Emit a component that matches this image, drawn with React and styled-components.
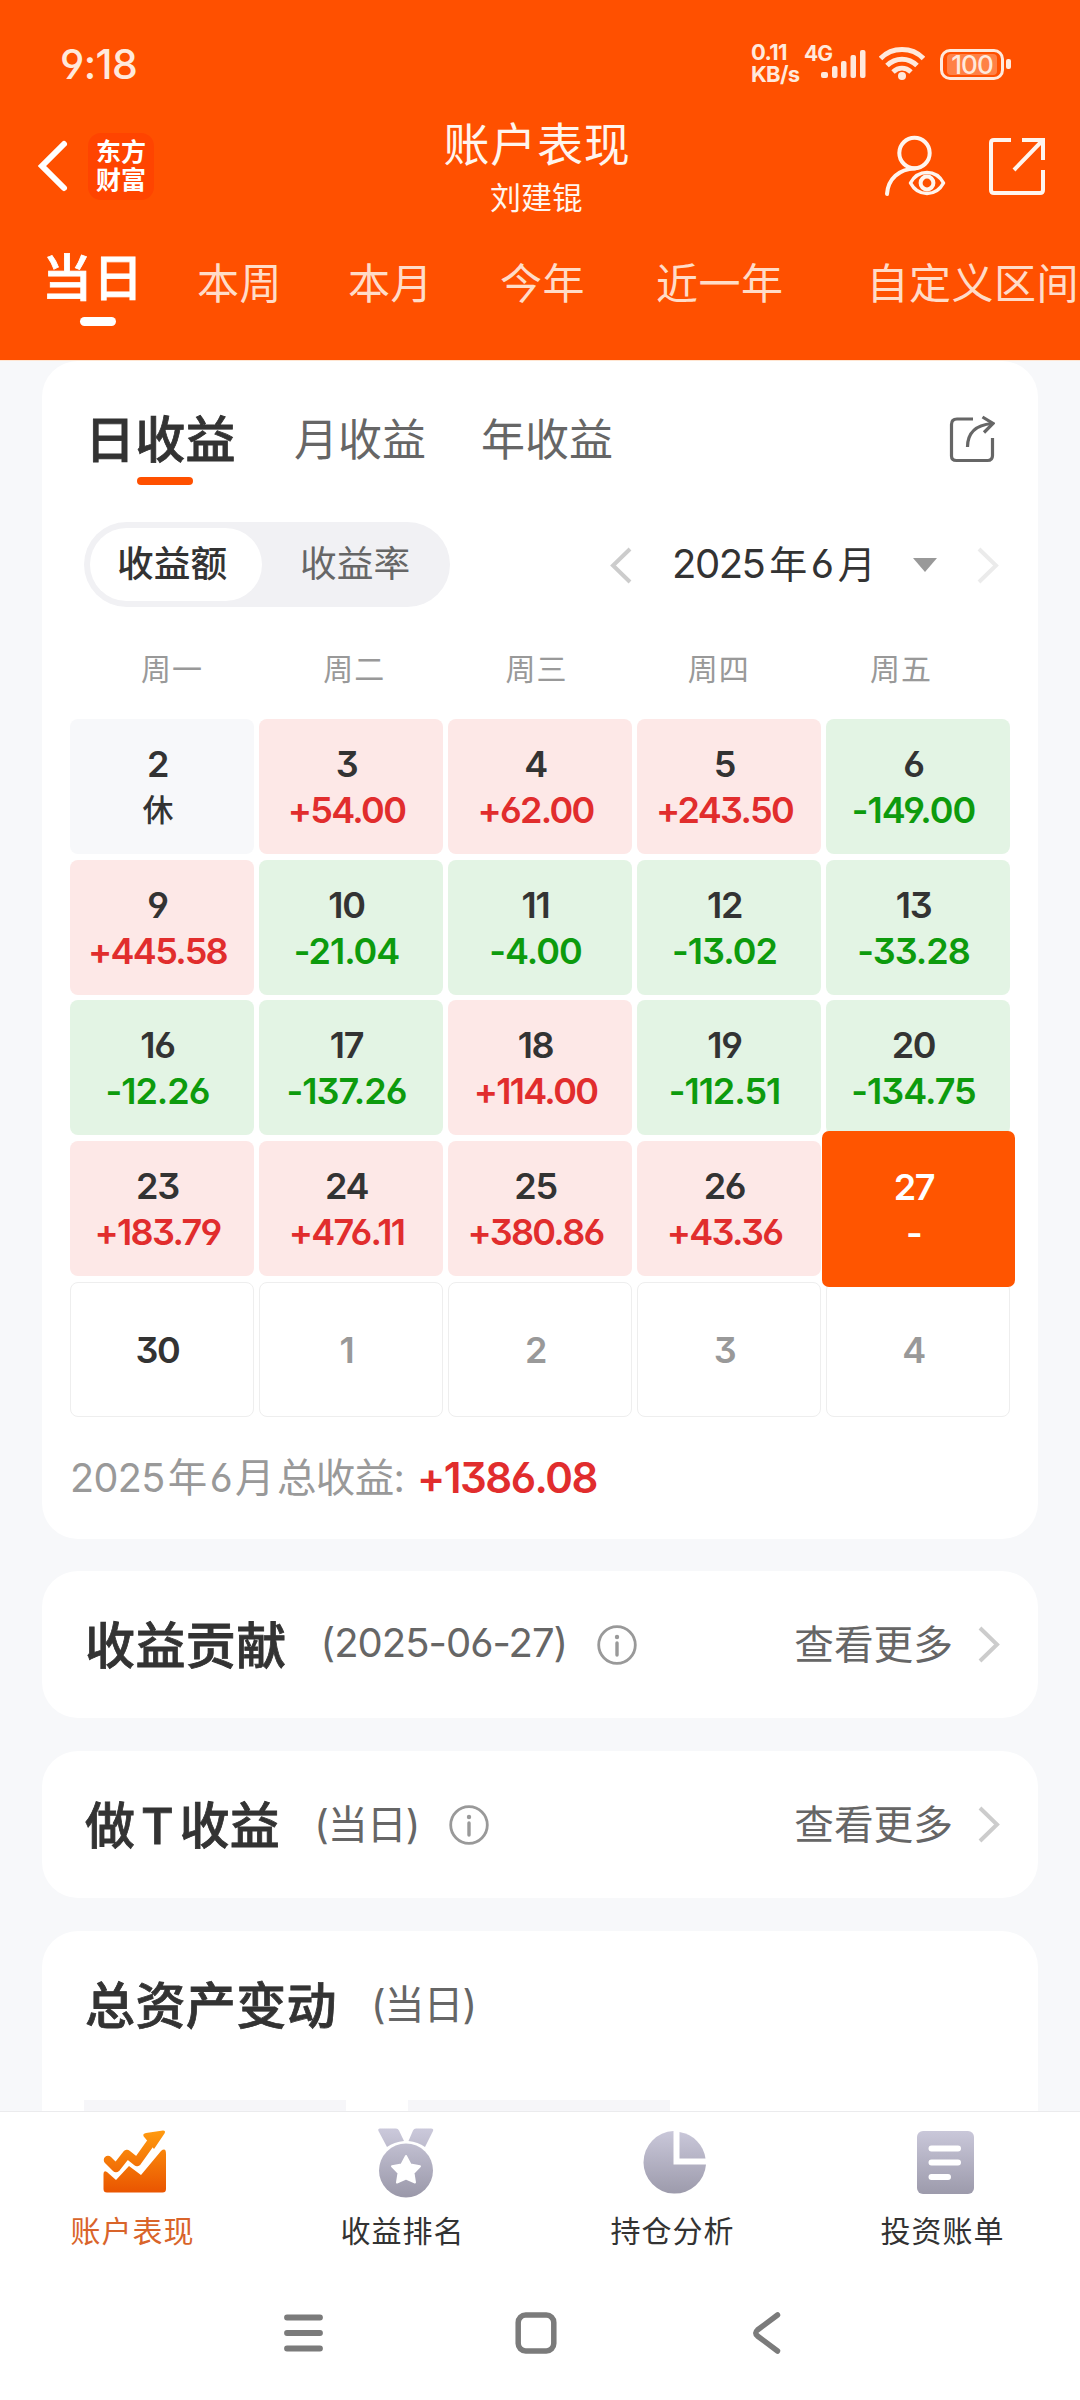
import React from 'react';
import styled, { createGlobalStyle, css } from 'styled-components';

const weekdays = ['周一', '周二', '周三', '周四', '周五'];

const days = [
	{ day: '2', value: '休', kind: 'rest' },
	{ day: '3', value: '+54.00', kind: 'up' },
	{ day: '4', value: '+62.00', kind: 'up' },
	{ day: '5', value: '+243.50', kind: 'up' },
	{ day: '6', value: '-149.00', kind: 'down' },
	{ day: '9', value: '+445.58', kind: 'up' },
	{ day: '10', value: '-21.04', kind: 'down' },
	{ day: '11', value: '-4.00', kind: 'down' },
	{ day: '12', value: '-13.02', kind: 'down' },
	{ day: '13', value: '-33.28', kind: 'down' },
	{ day: '16', value: '-12.26', kind: 'down' },
	{ day: '17', value: '-137.26', kind: 'down' },
	{ day: '18', value: '+114.00', kind: 'up' },
	{ day: '19', value: '-112.51', kind: 'down' },
	{ day: '20', value: '-134.75', kind: 'down' },
	{ day: '23', value: '+183.79', kind: 'up' },
	{ day: '24', value: '+476.11', kind: 'up' },
	{ day: '25', value: '+380.86', kind: 'up' },
	{ day: '26', value: '+43.36', kind: 'up' },
	{ day: '27', value: '-', kind: 'today' },
	{ day: '30', kind: 'empty' },
	{ day: '1', kind: 'next' },
	{ day: '2', kind: 'next' },
	{ day: '3', kind: 'next' },
	{ day: '4', kind: 'next' }
];

const periods = [
	{ label: '本周', gap: 53 },
	{ label: '本月', gap: 66 },
	{ label: '今年', gap: 67 },
	{ label: '近一年', gap: 71 },
	{ label: '自定义区间', gap: 83 }
];

function StatusIcons() {
	return (
		<StatusRight>
			<NetSpeed>
				<span>0.11</span>
				<span>KB/s</span>
			</NetSpeed>
			<NetType>4G</NetType>
			<svg width="46" height="30" viewBox="0 0 46 30" fill="#ffe9dc">
				<rect x="0" y="23" width="7" height="6" rx="2" />
				<rect x="11" y="17" width="5.5" height="12" rx="2" />
				<rect x="20" y="12" width="5.5" height="17" rx="2" />
				<rect x="29.5" y="6" width="5.5" height="23" rx="2" />
				<rect x="39" y="1" width="5.5" height="28" rx="2" />
			</svg>
			<WifiIcon width="46" height="36" viewBox="0 0 46 36" fill="none" stroke="#ffe9dc" strokeWidth="5">
				<path d="M1.5 12.5C13 .5 33 .5 44.500 12.500" />
				<path d="M8 19.500C16.500 11 29.500 11 38 19.500" />
				<path d="M14 26C19.500 21 26.500 21 32 26" />
				<circle cx="23" cy="30" r="4" fill="#ffe9dc" stroke="none" />
			</WifiIcon>
			<Battery><span>100</span></Battery>
			<BatteryTip />
		</StatusRight>
	);
}

function UserEyeIcon() {
	return (
		<svg width="64" height="66" viewBox="0 0 64 66" fill="none" stroke="#fff5ee" strokeWidth="4">
			<circle cx="31.500" cy="20" r="15.200" />
			<path d="M4 61C5 46 16 36 32 35.500" strokeLinecap="round" />
			<path d="M27.500 50C35 36 53 36 60.500 50C53 64 35 64 27.500 50Z" fill="#ff5000" strokeWidth="3.500" strokeLinejoin="round" />
			<circle cx="44" cy="50" r="6.400" strokeWidth="4" />
		</svg>
	);
}

function ExportIcon() {
	return (
		<svg width="58" height="60" viewBox="0 0 58 60" fill="none" stroke="#fff5ee" strokeWidth="4">
			<path d="M23 4H6Q3 4 3 7V54Q3 57 6 57H52Q55 57 55 54V34" />
			<path d="M34 4H55V24M54 5L26 34" />
		</svg>
	);
}

function ShareIcon() {
	return (
		<svg width="46" height="48" viewBox="0 0 46 48" fill="none" stroke="#666" strokeWidth="3.200">
			<path d="M24 4H8Q2.500 4 2.500 9.500V41Q2.500 45.500 7.500 45.500H38.500Q43.500 45.500 43.500 40.500V23" />
			<path d="M18.500 32C18.500 17 27 10 43 8.500" />
			<path d="M33.500 2L44 8.500L35 17.500" />
		</svg>
	);
}

function Chevron({ color, left }) {
	return (
		<svg width="22" height="37" viewBox="0 0 22 37" fill="none" stroke={color} strokeWidth="4">
			<path d={left ? 'M20 2L3 18.500L20 35' : 'M2 2L19 18.500L2 35'} />
		</svg>
	);
}

function InfoIcon() {
	return (
		<svg width="40" height="40" viewBox="0 0 40 40" fill="none" stroke="#999" strokeWidth="2.800">
			<circle cx="20" cy="20" r="18.300" />
			<circle cx="20" cy="12" r="2.200" fill="#999" stroke="none" />
			<path d="M20 18V30" strokeWidth="3.400" strokeLinecap="round" />
		</svg>
	);
}

function ChartIcon() {
	return (
		<svg width="72" height="72" viewBox="0 0 72 72">
			<defs>
				<linearGradient id="orange" gradientUnits="userSpaceOnUse" x1="0" y1="4" x2="0" y2="66">
					<stop offset="0" stopColor="#ff990f" />
					<stop offset="1" stopColor="#e95300" />
				</linearGradient>
			</defs>
			<path d="M9 32L17 40L28 26L38 34L53 13" fill="none" stroke="url(#orange)" strokeWidth="8.500" strokeLinecap="round" strokeLinejoin="round" />
			<path d="M46 10Q42 6 47 5L64 2.500Q67 2.500 65.500 5.500L55 21Z" fill="url(#orange)" />
			<path d="M4.500 46Q4.500 42 8 44L17 52L30 38L42 47L62 23Q67 19 67 26V61Q67 64.500 63.500 64.500H8Q4.500 64.500 4.500 61Z" fill="url(#orange)" />
		</svg>
	);
}

function GreyGradient() {
	return (
		<defs>
			<linearGradient id="grey" gradientUnits="userSpaceOnUse" x1="0" y1="2" x2="0" y2="68">
				<stop offset="0" stopColor="#cac8da" />
				<stop offset="1" stopColor="#9b99aa" />
			</linearGradient>
		</defs>
	);
}

function MedalIcon() {
	return (
		<svg width="72" height="72" viewBox="-1 0 72 72" fill="url(#grey)">
			<GreyGradient />
			<path d="M10 .5H26Q28 .5 29 2.500L34 13Q24 14 17 19L8.500 3Q7.500 .5 10 .5Z" />
			<path d="M61 .5H46Q44 .5 43 2.500L38.500 13Q48 14 55 19L63 3Q64 .5 61 .5Z" />
			<circle cx="36" cy="42.500" r="27" />
			<path d="M36 28L40.500 36.500L50 38.200L43.500 45L45 54.500L36 50.500L27 54.500L28.500 45L22 38.200L31.500 36.500Z" fill="#fff" stroke="#fff" strokeWidth="2" strokeLinejoin="round" />
		</svg>
	);
}

function PieIcon() {
	return (
		<svg width="72" height="72" viewBox="0 0 72 72" fill="url(#grey)">
			<path d="M34.500 3A31.300 31.300 0 1 0 67 36.500H34.500Z" />
			<path d="M40.500 4A31 31 0 0 1 66.500 30.500H40.500Z" />
		</svg>
	);
}

function BillIcon() {
	return (
		<svg width="72" height="72" viewBox="0 0 72 72" fill="url(#grey)">
			<rect x="8" y="3" width="57" height="63" rx="6" />
			<path d="M22.500 20.500H49M22.500 34.500H49M22.500 49H39" stroke="#fff" strokeWidth="6" strokeLinecap="round" />
		</svg>
	);
}

function SectionCard({ title, note, tall, more }) {
	return (
		<Card $height={tall ? 181 : 147}>
			<SectionHead>
				<SectionTitle>{title}</SectionTitle>
				<SectionNote>{note}</SectionNote>
				{more && <InfoIcon />}
				{more && (
					<More>
						<span>查看更多</span>
						<Chevron color="#ccc" />
					</More>
				)}
			</SectionHead>
			{tall && (
				<Stubs>
					<Stub />
					<Stub />
				</Stubs>
			)}
		</Card>
	);
}

function App() {
	return (
		<Screen>
			<GlobalStyle />
			<Header>
				<StatusBar>
					<Clock>9:18</Clock>
					<StatusIcons />
				</StatusBar>
				<TitleBar>
					<TitleLeft>
						<svg width="32" height="54" viewBox="0 0 32 54" fill="none" stroke="#fff" strokeWidth="6" strokeLinecap="round" strokeLinejoin="miter">
							<path d="M27 5L5 27L27 49" />
						</svg>
						<Logo>
							<span>东方</span>
							<span>财富</span>
						</Logo>
					</TitleLeft>
					<TitleCenter>
						<Title>账户表现</Title>
						<Owner>刘建锟</Owner>
					</TitleCenter>
					<TitleRight>
						<UserEyeIcon />
						<ExportIcon />
					</TitleRight>
				</TitleBar>
				<PeriodTabs>
					<ActivePeriod>当日</ActivePeriod>
					{periods.map(item =>
						<Period key={item.label} $gap={item.gap}>{item.label}</Period>
					)}
				</PeriodTabs>
			</Header>
			<Content>
				<Card $height={1178}>
					<ProfitTabs>
						<ProfitTab $active>日收益</ProfitTab>
						<ProfitTab>月收益</ProfitTab>
						<ProfitTab>年收益</ProfitTab>
						<ShareIcon />
					</ProfitTabs>
					<Filters>
						<Switch>
							<SwitchItem $active>收益额</SwitchItem>
							<SwitchItem>收益率</SwitchItem>
						</Switch>
						<MonthPicker>
							<Chevron color="#ccc" left />
							<Month>2025<i>年</i>6<i>月</i></Month>
							<Caret />
							<Chevron color="#ebebeb" />
						</MonthPicker>
					</Filters>
					<Weekdays>
						{weekdays.map(name => <span key={name}>{name}</span>)}
					</Weekdays>
					<Calendar>
						{days.map((item, i) =>
							<Day key={i} $kind={item.kind}>
								<span>{item.day}</span>
								{item.value && <DayValue $kind={item.kind}>{item.value}</DayValue>}
							</Day>
						)}
					</Calendar>
					<Total>
						<TotalLabel>2025<i>年</i>6<i>月</i>总收益:</TotalLabel>
						<TotalValue>+1386.08</TotalValue>
					</Total>
				</Card>
				<SectionCard title="收益贡献" note="(2025-06-27)" more />
				<SectionCard title={<>做<i>T</i>收益</>} note="(当日)" more />
				<SectionCard title="总资产变动" note="(当日)" tall />
			</Content>
			<TabBar>
				<TabItem $active><ChartIcon /><span>账户表现</span></TabItem>
				<TabItem><MedalIcon /><span>收益排名</span></TabItem>
				<TabItem><PieIcon /><span>持仓分析</span></TabItem>
				<TabItem><BillIcon /><span>投资账单</span></TabItem>
			</TabBar>
			<SystemNav>
				<svg width="42" height="44" viewBox="0 0 42 44" stroke="#7b7b7b" strokeWidth="5.800" strokeLinecap="round">
					<path d="M3 6.500H36M3 22H36M3 37.500H36" />
				</svg>
				<svg width="42" height="44" viewBox="0 0 42 44" fill="none" stroke="#7b7b7b" strokeWidth="5.500">
					<rect x="3.200" y="4" width="35.600" height="36" rx="7.500" />
				</svg>
				<svg width="42" height="44" viewBox="0 0 42 44" fill="none" stroke="#7b7b7b" strokeWidth="5.500" strokeLinecap="round">
					<path d="M31.500 4L11.500 19Q8 22 11.500 25L31.500 40" />
				</svg>
			</SystemNav>
		</Screen>
	);
}

const GlobalStyle = createGlobalStyle`
	* { box-sizing: border-box; }
	body {
		margin: 0;
		font-family: Inter, "Noto Sans CJK SC", sans-serif;
		font-feature-settings: "cv03", "cv04", "cv09";
		color: #333;
	}
	i { font-style: normal; }
	svg { display: block; flex-shrink: 0; }
`;

const Screen = styled.div`
	width: 1080px;
	height: 2400px;
	display: flex;
	flex-direction: column;
	overflow: hidden;
	background: #fff;
`;

const Header = styled.header`
	height: 361px;
	flex-shrink: 0;
	background: #ff5000;
	border-bottom: 1px solid #ffe6d2;
	overflow: hidden;
`;

const StatusBar = styled.div`
	height: 96px;
	padding: 32px 69px 0 60px;
	display: flex;
	justify-content: space-between;
	align-items: flex-start;
	color: #ffe9dc;
`;

const Clock = styled.div`
	height: 64px;
	line-height: 64px;
	font-size: 41px;
	font-weight: 500;
	letter-spacing: -0.6px;
`;

const StatusRight = styled.div`
	height: 64px;
	display: flex;
	align-items: center;
	font-weight: 700;
`;

const NetSpeed = styled.div`
	width: 53px;
	margin-top: -2px;
	display: flex;
	flex-direction: column;
	font-size: 22px;
	line-height: 22px;
	letter-spacing: -0.7px;
`;

const NetType = styled.div`
	width: 17px;
	margin-top: -20px;
	font-size: 21px;
	line-height: 22px;
	letter-spacing: -1px;
`;

const WifiIcon = styled.svg`
	margin: 0 15px 0 12px;
`;

const Battery = styled.div`
	width: 64px;
	height: 31px;
	padding: 2px 4px;
	border: 3px solid #ffe9dc;
	border-radius: 10px;
	display: flex;

	> span {
		flex: 1;
		border-radius: 4px;
		background: #ff8146;
		text-align: center;
		font-size: 26px;
		font-weight: 500;
		line-height: 22px;
		letter-spacing: -1px;
	}
`;

const BatteryTip = styled.div`
	width: 5px;
	height: 10px;
	margin-left: 2px;
	border-radius: 2px;
	background: #ffe9dc;
`;

const TitleBar = styled.div`
	height: 140px;
	display: grid;
	grid-template-columns: 430px 1fr 437px;
	align-items: center;
	color: #fff5ee;
`;

const TitleLeft = styled.div`
	display: flex;
	align-items: center;
	gap: 19px;
	padding-left: 37px;
`;

const Logo = styled.div`
	width: 66px;
	height: 67px;
	border-radius: 13px;
	background: #ff4400;
	color: #fff;
	display: flex;
	flex-direction: column;
	align-items: center;
	justify-content: center;
	font-size: 25px;
	font-weight: 700;
	line-height: 28px;
`;

const TitleCenter = styled.div`
	text-align: center;
	white-space: nowrap;
`;

const Title = styled.div`
	font-size: 46px;
	line-height: 60px;
	letter-spacing: 0.7px;
	padding-left: 1px;
`;

const Owner = styled.div`
	font-size: 31px;
	line-height: 42px;
	margin-top: 3px;
`;

const TitleRight = styled.div`
	display: flex;
	align-items: center;
	justify-content: flex-end;
	gap: 41px;
	padding-right: 34px;
`;

const PeriodTabs = styled.nav`
	display: flex;
	padding-left: 42px;
	white-space: nowrap;
`;

const ActivePeriod = styled.div`
	width: 102px;
	margin-top: 12px;
	font-size: 50px;
	line-height: 60px;
	font-weight: 500;
	-webkit-text-stroke: 0.8px currentColor;
	letter-spacing: 1px;
	color: #fff;

	&::after {
		content: '';
		display: block;
		width: 36px;
		height: 9px;
		margin: 9px 0 0 38px;
		border-radius: 5px;
		background: #fff;
	}
`;

const Period = styled.div`
	margin: 18px 0 0 ${props => props.$gap}px;
	font-size: 42px;
	line-height: 60px;
	letter-spacing: 0.5px;
	color: #ffdcc8;
`;

const Content = styled.main`
	height: 1750px;
	flex-shrink: 0;
	padding: 0 42px;
	display: flex;
	flex-direction: column;
	gap: 33px;
	background: #f7f8fa;
	overflow: hidden;
`;

const Card = styled.section`
	height: ${props => props.$height}px;
	flex-shrink: 0;
	border-radius: ${props => props.$height === 181 ? '36px 36px 0 0' : '36px'};
	background: #fff;

	&:first-child {
		margin-bottom: -1px;
	}
`;

const ProfitTabs = styled.div`
	height: 161px;
	padding: 45px 43px 0 43px;
	display: flex;
	align-items: flex-start;

	> svg {
		margin: 9px 0 0 auto;
	}
`;

const ProfitTab = styled.div`
	font-size: 44px;
	line-height: 68px;
	color: #666;
	margin-left: 56px;

	& + & + & {
		margin-left: 55px;
	}

	${props => props.$active && css`
		width: 153px;
		font-size: 50px;
		font-weight: 500;
		-webkit-text-stroke: 0.8px currentColor;
		letter-spacing: 0.3px;
		color: #333;
		margin-left: 0;

		&::after {
			content: '';
			display: block;
			width: 56px;
			height: 8px;
			margin: 3px auto 0 52px;
			border-radius: 4px;
			background: #ff5000;
		}
	`}
`;

const Filters = styled.div`
	height: 86px;
	padding: 0 39px 0 42px;
	display: flex;
	align-items: center;
	justify-content: space-between;
`;

const Switch = styled.div`
	width: 366px;
	height: 85px;
	margin-top: -1px;
	padding: 6px;
	border-radius: 43px;
	background: #f1f1f4;
	display: flex;
`;

const SwitchItem = styled.div`
	width: ${props => props.$active ? 172 : 182}px;
	border-radius: 37px;
	background: ${props => props.$active ? '#fff' : 'transparent'};
	color: ${props => props.$active ? '#333' : '#666'};
	font-size: 36.700px;
	font-weight: ${props => props.$active ? 500 : 400};
	line-height: 72px;
	padding-left: ${props => props.$active ? 27 : 38}px;
`;

const MonthPicker = styled.div`
	display: flex;
	align-items: center;
`;

const Month = styled.div`
	width: 202px;
	margin: -7px 39px 0 40px;
	font-size: 40px;
	letter-spacing: -1.5px;
	white-space: nowrap;

	i {
		font-size: 38px;
		margin: 0 5px;
	}
`;

const Caret = styled.div`
	border: 12px solid transparent;
	border-top: 14px solid #999;
	border-bottom: 0;
	margin-right: 40px;
`;

const Weekdays = styled.div`
	height: 111px;
	padding: 39px 46px 0 39px;
	display: grid;
	grid-template-columns: repeat(5, 1fr);
	text-align: center;
	font-size: 30px;
	line-height: 44px;
	letter-spacing: 1px;
	color: #999;
`;

const Calendar = styled.div`
	padding: 0 28px;
	display: grid;
	grid-template-columns: repeat(5, 184px);
	grid-auto-rows: 135px;
	gap: 5.700px 5px;
`;

const kinds = {
	rest: css`background: #f7f8fa;`,
	up: css`background: #fde8e7;`,
	down: css`background: #e3f4e4;`,
	today: css`
		position: relative;
		z-index: 1;
		margin: -10px -5px -11px -4px;
		border-radius: 7px;
		background: #ff5500;
		color: #fff;
	`,
	empty: css`border: 1px solid #eee;`,
	next: css`border: 1px solid #eee; color: #999;`
};

const Day = styled.div`
	display: flex;
	flex-direction: column;
	align-items: center;
	justify-content: center;
	padding: 1px 9px 0 0;
	border-radius: 8px;
	font-size: 36px;
	font-weight: 575;
	line-height: 46px;
	letter-spacing: -1.3px;
	${props => kinds[props.$kind]}
`;

const DayValue = styled.span`
	color: ${props => ({ up: '#e12d2d', down: '#0d9b0d' })[props.$kind] || 'inherit'};
	font-size: ${props => props.$kind === 'rest' ? 31 : 36}px;
	font-weight: ${props => props.$kind === 'rest' ? 500 : 575};
	letter-spacing: ${props => props.$kind === 'up' ? -1.7 : -1}px;
`;

const Total = styled.div`
	padding: 31px 28px 0;
	display: flex;
	line-height: 60px;
`;

const TotalLabel = styled.div`
	width: 347px;
	font-size: 39.500px;
	letter-spacing: -0.6px;
	color: #999;
	white-space: nowrap;

	i {
		margin: 0 3px;
	}
`;

const TotalValue = styled.div`
	font-size: 42px;
	font-weight: 600;
	letter-spacing: -1.5px;
	color: #e12d2d;
`;

const SectionHead = styled.div`
	height: 147px;
	padding: 0 38px 0 43px;
	display: flex;
	align-items: center;
`;

const SectionTitle = styled.h2`
	margin: -6px 0 0;
	font-size: 50px;
	font-weight: 500;
	-webkit-text-stroke: 0.8px currentColor;
	letter-spacing: 0.4px;

	i {
		margin: 0 5.500px;
	}
`;

const SectionNote = styled.span`
	margin: -5px 30px 0 34px;
	font-size: 40px;
	letter-spacing: -1px;
	color: #666;
`;

const More = styled.div`
	margin-left: auto;
	display: flex;
	align-items: center;
	gap: 25px;
	font-size: 39.700px;
	color: #666;

	> span {
		margin-top: -7px;
	}
`;

const Stubs = styled.div`
	display: flex;
	gap: 62px;
	padding: 22px 42px 0;
`;

const Stub = styled.div`
	width: 262px;
	height: 12px;
	background: #f6f6f9;
`;

const TabBar = styled.nav`
	height: 162px;
	flex-shrink: 0;
	border-top: 1px solid #ebebed;
	display: grid;
	grid-template-columns: repeat(4, 270px);
`;

const TabItem = styled.div`
	padding-top: 16px;
	display: flex;
	flex-direction: column;
	align-items: center;
	font-size: 30px;
	line-height: 40px;
	letter-spacing: 1px;
	color: ${props => props.$active ? '#d9642a' : '#333'};

	> span {
		margin: 11px 5px 0 0;
	}
`;

const SystemNav = styled.div`
	height: 120px;
	display: flex;
	justify-content: center;
	gap: 189px;
	padding: 38px 9px 0 0;
`;

export default App;
